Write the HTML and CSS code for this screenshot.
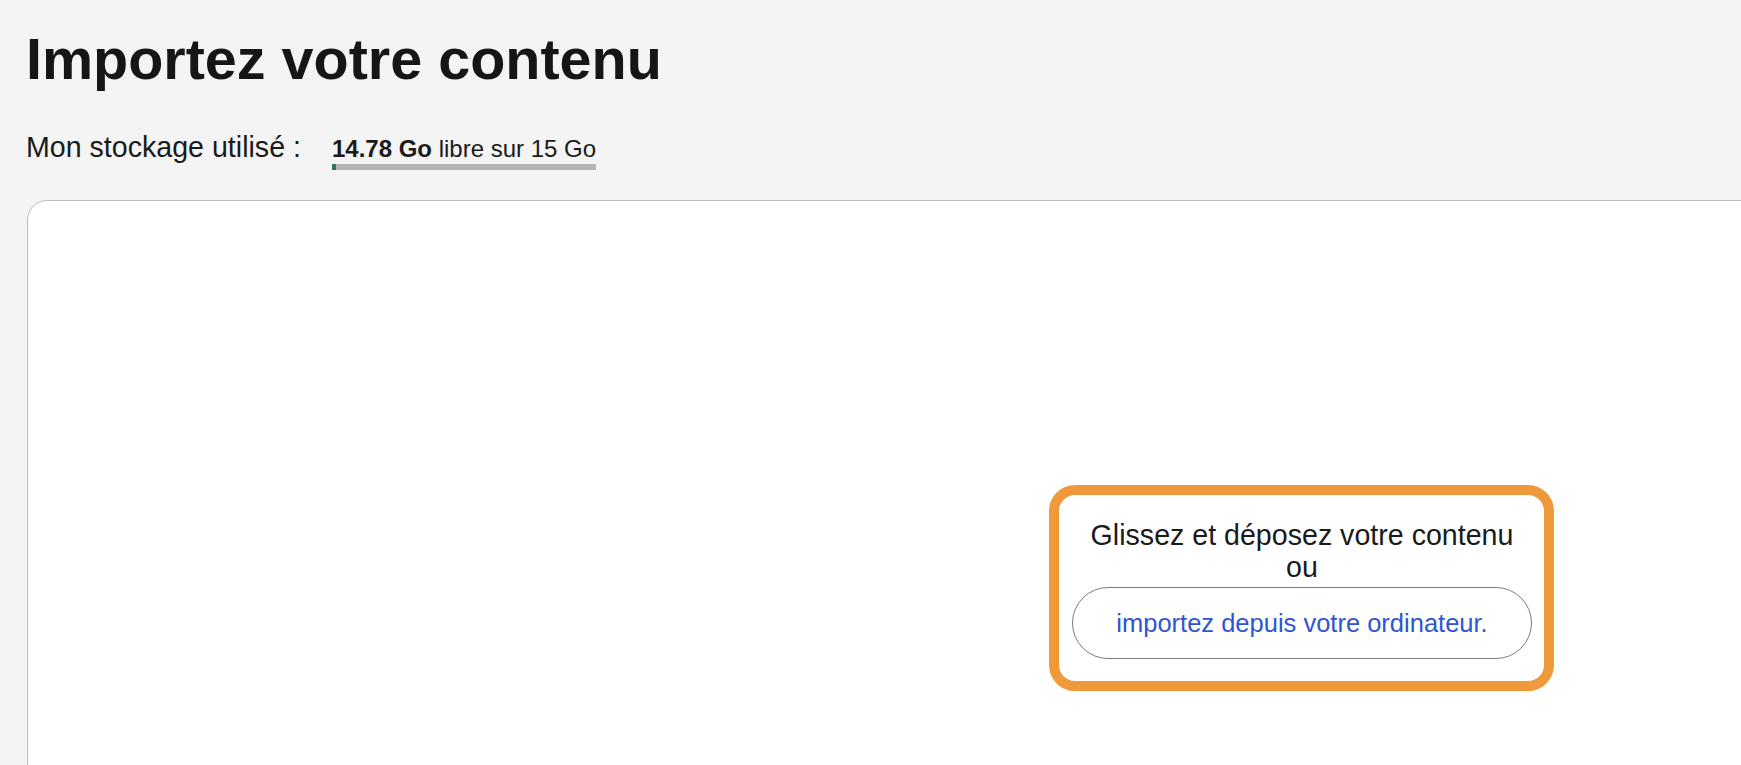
FILE: index.html
```html
<!DOCTYPE html>
<html lang="fr">
<head>
<meta charset="utf-8">
<title>Importez votre contenu</title>
<link rel="stylesheet" href="styles.css">
</head>
<body>
<main class="page">
  <h1 class="title">Importez votre contenu</h1>
  <div class="storage">
    <span class="storage-label">Mon stockage utilisé :</span>
    <div class="storage-value">
      <div class="storage-text"><strong>14.78 Go</strong> libre sur 15 Go</div>
      <div class="storage-bar"><div class="storage-used" style="width: 1.5%"></div></div>
    </div>
  </div>
  <section class="card">
    <div class="dropzone">
      <p class="drop-text">Glissez et déposez votre contenu<br>ou</p>
      <button class="upload-btn" type="button">importez depuis votre ordinateur.</button>
    </div>
  </section>
</main>
</body>
</html>
```
FILE: styles.css
```css
html, body {
  margin: 0;
  padding: 0;
  height: 100%;
  overflow: hidden;
  background: #f4f4f4;
}

body {
  font-family: "Liberation Sans", Arial, Helvetica, sans-serif;
  color: #1a1a1a;
}

.page {
  padding-left: 26px;
  display: flex;
  flex-direction: column;
  box-sizing: border-box;
}

.title {
  margin: 26px 0 0 0;
  font-size: 57.5px;
  line-height: 66px;
  font-weight: 700;
  color: #161616;
}

.storage {
  display: flex;
  align-items: baseline;
  margin-top: 39px;
}

.storage-label {
  font-size: 28.6px;
  line-height: 32px;
  margin-right: 31px;
}

.storage-value {
  display: flex;
  flex-direction: column;
}

.storage-text {
  font-size: 24px;
  line-height: 28px;
}

.storage-text strong {
  font-weight: 700;
}

.storage-bar {
  margin-top: 1px;
  height: 6px;
  background: #b4b4b4;
  display: flex;
}

.storage-used {
  background: #2b7a5c;
  min-width: 3px;
}

.card {
  margin-top: 30px;
  margin-left: 1px;
  width: 2400px;
  height: 820px;
  flex: none;
  background: #ffffff;
  border: 1px solid #bdbdbd;
  border-radius: 20px;
  padding: 284px 0 0 1021px;
  box-sizing: border-box;
}

.dropzone {
  width: 505px;
  box-sizing: border-box;
  border: 10px solid #f0993b;
  border-radius: 26px;
  padding: 24px 12px 22px 13px;
  background: #ffffff;
  display: flex;
  flex-direction: column;
  align-items: stretch;
}

.drop-text {
  margin: 0 0 4px 0;
  text-align: center;
  font-size: 28.6px;
  line-height: 32px;
  color: #1a1a1a;
}

.upload-btn {
  height: 72px;
  border: 1px solid #7a7a7a;
  border-radius: 36px;
  background: #ffffff;
  color: #2f55d0;
  font-family: "Liberation Sans", Arial, Helvetica, sans-serif;
  font-size: 25.5px;
  padding: 0;
  cursor: pointer;
}
```
